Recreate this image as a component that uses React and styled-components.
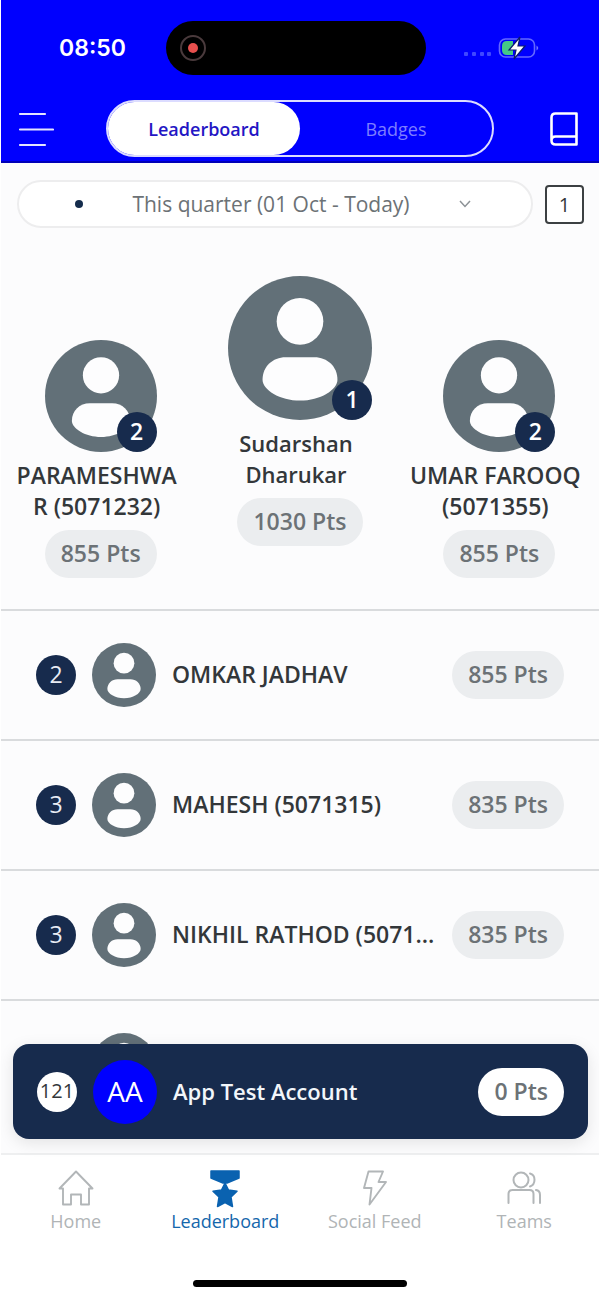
import React, { useState } from "react";
import styled, { createGlobalStyle } from "styled-components";

const podium = [
  { rank: 2, lines: ["PARAMESHWA", "R (5071232)"], points: 855 },
  { rank: 1, lines: ["Sudarshan", "Dharukar"], points: 1030, first: true },
  { rank: 2, lines: ["UMAR FAROOQ", "(5071355)"], points: 855 },
];

const players = [
  { rank: 2, name: "OMKAR JADHAV", points: 855 },
  { rank: 3, name: "MAHESH (5071315)", points: 835 },
  { rank: 3, name: "NIKHIL RATHOD (5071...", points: 835 },
];

const Avatar = ({ size }) => (
  <AvatarSvg viewBox="0 0 100 100" $size={size} aria-hidden="true">
    <circle cx="50" cy="50" r="50" fill="#627078" />
    <circle cx="50" cy="31.5" r="16.2" fill="#fdfdfe" />
    <path
      d="M40 56.5H60C69 56.5 76 63 76 72C76 79 64 86.5 50 86.5S24 79 24 72C24 63 31 56.5 40 56.5Z"
      fill="#fdfdfe"
    />
  </AvatarSvg>
);

const StatusBar = () => (
  <Status>
    <Time>08:50</Time>
    <Island>
      <svg width="26" height="26" viewBox="0 0 26 26">
        <circle cx="13" cy="13" r="12" fill="none" stroke="#4a3a3c" strokeWidth="2" />
        <circle cx="13" cy="13" r="5" fill="#e8504e" />
      </svg>
    </Island>
    <Signals>
      <svg width="76" height="24" viewBox="0 0 76 24">
        <g fill="#4048ff">
          <rect x="1" y="16" width="4" height="4" rx="1" />
          <rect x="9" y="16" width="4" height="4" rx="1" />
          <rect x="17" y="16" width="4" height="4" rx="1" />
          <rect x="24" y="16" width="4" height="4" rx="1" />
        </g>
        <rect x="36.5" y="3" width="35" height="18" rx="6" fill="none" stroke="#6468ff" strokeWidth="1.6" />
        <path d="M50 5H44Q39 5 39 10V14Q39 19 44 19H50Z" fill="#45c986" />
        <path d="M73.5 9.5Q77 12 73.5 14.5Z" fill="#7478ff" />
        <path d="M57 1L46 14H53L51 23L62 10H55Z" fill="#fff" stroke="#0a1c6c" strokeWidth="1.2" />
      </svg>
    </Signals>
  </Status>
);

const MenuIcon = () => (
  <svg width="36" height="36" viewBox="0 0 36 36" stroke="#e4e4ff" strokeWidth="2.2" strokeLinecap="round">
    <path d="M2 3H27M2 18.5H35M2 34H27" />
  </svg>
);

const BookIcon = () => (
  <svg width="28" height="34" viewBox="0 0 28 34" fill="none" stroke="#fff" strokeWidth="2.6" strokeLinejoin="round">
    <path d="M1.5 28.5V5.5Q1.5 1.5 5.5 1.5H26.5V32.5H5.5Q1.5 32.5 1.5 28.5Q1.5 24.5 5.5 24.5H26.5" />
  </svg>
);

const HomeIcon = () => (
  <svg width="36" height="36" viewBox="0 0 36 36" fill="none" stroke="#b2b6b8" strokeWidth="1.9" strokeLinejoin="round">
    <path d="M18 1.5L1.5 18.5H5V34.5H13V24.5H23V34.5H31V18.5H34.5Z" />
  </svg>
);

const MedalIcon = () => (
  <svg width="36" height="38" viewBox="0 0 36 38" fill="#0a62b0" stroke="#0a62b0" strokeLinejoin="round">
    <path d="M4 1H32V8L20 13H16L4 8Z" strokeWidth="1.5" />
    <path d="M18 13L21.5 20L30 21.2L24 27L25.5 36.5L18 32.5L10.5 36.5L12 27L6 21.2L14.5 20Z" strokeWidth="1.5" />
  </svg>
);

const BoltIcon = () => (
  <svg width="36" height="36" viewBox="0 0 36 36" fill="none" stroke="#b2b6b8" strokeWidth="1.9" strokeLinejoin="round">
    <path d="M11.5 1.5H26L21.5 12H29L12.5 34.5L14.5 18H7Z" />
  </svg>
);

const TeamIcon = () => (
  <svg width="36" height="36" viewBox="0 0 36 36" fill="none" stroke="#b2b6b8" strokeWidth="2" strokeLinecap="round" strokeLinejoin="round">
    <circle cx="15" cy="10" r="7.5" />
    <path d="M2.5 33V24Q2.5 20 6.5 20H23.5Q27.5 20 27.5 24V33" />
    <path d="M24 3.5C30 5 30 14.5 24 16.5M30 20Q34 20.5 34 25V33" />
  </svg>
);

const tabs = [
  { label: "Home", Icon: HomeIcon },
  { label: "Leaderboard", Icon: MedalIcon, active: true },
  { label: "Social Feed", Icon: BoltIcon },
  { label: "Teams", Icon: TeamIcon },
];

export default function App() {
  const [view, setView] = useState("Leaderboard");

  return (
    <Page>
      <GlobalStyle />
      <Header>
        <StatusBar />
        <Toolbar>
          <IconButton type="button" aria-label="Menu">
            <MenuIcon />
          </IconButton>
          <Segments>
            {["Leaderboard", "Badges"].map(name => (
              <Segment key={name} type="button" $active={view === name} onClick={() => setView(name)}>
                {name}
              </Segment>
            ))}
          </Segments>
          <IconButton type="button" aria-label="Rules">
            <BookIcon />
          </IconButton>
        </Toolbar>
      </Header>

      <Main>
        <Filters>
          <PeriodButton type="button">
            <Dot />
            <span>This quarter (01 Oct - Today)</span>
            <svg width="12" height="8" viewBox="0 0 12 8" fill="none" stroke="#8c9296" strokeWidth="1.5">
              <path d="M1 1L6 6.5L11 1" />
            </svg>
          </PeriodButton>
          <CountButton type="button">1</CountButton>
        </Filters>

        <Podium>
          {podium.map(({ rank, lines, points, first }) => (
            <Winner key={lines[0]} $first={first}>
              <Portrait>
                <Avatar size={first ? 144 : 112} />
                <PortraitRank>{rank}</PortraitRank>
              </Portrait>
              <WinnerName $first={first}>
                {lines[0]}
                <br />
                {lines[1]}
              </WinnerName>
              <Points>{points} Pts</Points>
            </Winner>
          ))}
        </Podium>

        <List>
          {players.map(({ rank, name, points }) => (
            <Row key={name}>
              <Rank>{rank}</Rank>
              <Avatar size={64} />
              <Name>{name}</Name>
              <Points>{points} Pts</Points>
            </Row>
          ))}
          <Row aria-hidden="true">
            <Rank />
            <Avatar size={64} />
            <Name />
          </Row>
        </List>
      </Main>

      <Footer>
        <Account>
          <Rank $light>121</Rank>
          <Initials>AA</Initials>
          <Name $small>App Test Account</Name>
          <Points $light>0 Pts</Points>
        </Account>
        <Nav>
          {tabs.map(({ label, Icon, active }) => (
            <NavLink key={label} href="#" $active={active}>
              <Icon />
              {label}
            </NavLink>
          ))}
        </Nav>
        <HomeBar />
      </Footer>
    </Page>
  );
}

const GlobalStyle = createGlobalStyle`
  * {
    box-sizing: border-box;
  }
  body {
    margin: 0;
    background: #fff;
    color: #33373a;
    font-family: "Open Sans", "Noto Sans", sans-serif;
  }
  button {
    padding: 0;
    border: 0;
    background: none;
    font: inherit;
    cursor: pointer;
  }
  svg {
    display: block;
    flex-shrink: 0;
  }
`;

const Page = styled.div`
  display: flex;
  flex-direction: column;
  height: 100vh;
  padding: 0 1px;
`;

const Header = styled.header`
  background: #0000fe;
  border-bottom: 2px solid #0000b8;
`;

const Status = styled.div`
  display: grid;
  grid-template-columns: 1fr 260px 1fr;
  align-items: center;
  padding: 21px 16px 0 8px;
`;

const Time = styled.span`
  justify-self: center;
  padding-left: 10px;
  color: #fff;
  font-family: Inter, sans-serif;
  font-size: 23px;
  font-weight: 600;
`;

const Island = styled.div`
  display: flex;
  align-items: center;
  height: 54px;
  padding-left: 14px;
  border-radius: 27px;
  background: #000;
`;

const Signals = styled.div`
  justify-self: center;
  padding-right: 8px;
`;

const Toolbar = styled.div`
  display: flex;
  align-items: center;
  padding: 25px 21px 4px 17px;
`;

const IconButton = styled.button`
  display: flex;
`;

const Segments = styled.div`
  display: flex;
  flex: 1;
  height: 57px;
  margin: 0 56px 0 52px;
  border: 2px solid #dcdcff;
  border-radius: 29px;
`;

const Segment = styled.button`
  flex: 1;
  border-radius: 27px;
  background: ${({ $active }) => ($active ? "#fff" : "transparent")};
  color: ${({ $active }) => ($active ? "#2416c4" : "#7d7dff")};
  font-size: 18px;
  font-weight: ${({ $active }) => ($active ? 600 : 500)};
`;

const Main = styled.main`
  flex: 1;
  min-height: 0;
  overflow-y: auto;
  scrollbar-width: none;
  background: #fcfcfd;
`;

const Filters = styled.div`
  display: flex;
  align-items: center;
  gap: 12px;
  padding: 17px 15px 0 16px;
`;

const PeriodButton = styled.button`
  display: flex;
  flex: 1;
  align-items: center;
  justify-content: space-between;
  height: 48px;
  padding: 0 60px 0 56px;
  border: 2px solid #ededee;
  border-radius: 24px;
  background: #fff;
  color: #6c7276;
  font-size: 21px;
  font-weight: 500;
`;

const Dot = styled.i`
  width: 8px;
  height: 8px;
  border-radius: 50%;
  background: #142c4c;
`;

const CountButton = styled.button`
  width: 39px;
  height: 39px;
  border: 2px solid #3c4042;
  border-radius: 4px;
  background: #fff;
  color: #33373a;
  font-size: 20px;
`;

const Podium = styled.section`
  display: grid;
  grid-template-columns: repeat(3, 1fr);
  padding: 48px 0 31px;
  border-bottom: 2px solid #d9dbdd;
`;

const Winner = styled.div`
  display: flex;
  flex-direction: column;
  align-items: center;
  gap: 8px;
  padding-top: ${({ $first }) => ($first ? 0 : 64)}px;
`;

const Portrait = styled.div`
  position: relative;
`;

const AvatarSvg = styled.svg`
  width: ${({ $size }) => $size}px;
  height: ${({ $size }) => $size}px;
`;

const Rank = styled.span`
  display: flex;
  flex-shrink: 0;
  align-items: center;
  justify-content: center;
  width: 40px;
  height: 40px;
  padding-bottom: 2px;
  border-radius: 50%;
  background: ${({ $light }) => ($light ? "#fff" : "#172b4d")};
  color: ${({ $light }) => ($light ? "#33373a" : "#e8ecf4")};
  font-size: ${({ $light }) => ($light ? 20 : 23)}px;
`;

const PortraitRank = styled(Rank)`
  position: absolute;
  right: 0;
  bottom: 0;
  color: #fff;
  font-weight: 600;
`;

const WinnerName = styled.div`
  padding-right: 8px;
  font-size: ${({ $first }) => ($first ? 22 : 23)}px;
  font-weight: 600;
  line-height: 31px;
  text-align: center;
  white-space: nowrap;
`;

const Points = styled.span`
  flex-shrink: 0;
  padding: 0 16px 2px;
  border-radius: 24px;
  background: ${({ $light }) => ($light ? "#fff" : "#ebedef")};
  color: #6c7276;
  font-size: 23px;
  font-weight: 600;
  line-height: 46px;
`;

const List = styled.section`
  display: flex;
  flex-direction: column;
`;

const Row = styled.div`
  display: flex;
  align-items: center;
  gap: 16px;
  padding: 32px 35px;
  border-bottom: 2px solid #d9dbdd;

  &:last-child {
    border-bottom: 0;
  }
`;

const Name = styled.span`
  flex: 1;
  min-width: 0;
  padding-bottom: 2px;
  font-size: ${({ $small }) => ($small ? 22 : 23)}px;
  font-weight: 600;
  line-height: 32px;
  white-space: nowrap;
`;

const Footer = styled.footer`
  position: relative;
  border-top: 2px solid #eeeff0;
  background: #fff;
`;

const Account = styled.div`
  position: absolute;
  right: 11px;
  bottom: calc(100% + 16px);
  left: 12px;
  display: flex;
  align-items: center;
  gap: 16px;
  height: 95px;
  padding: 0 24px;
  border-radius: 16px;
  background: #172b4d;
  box-shadow: 0 4px 16px rgba(0, 0, 0, 0.1);
  color: #f2f6fa;
`;

const Initials = styled.span`
  display: flex;
  align-items: center;
  justify-content: center;
  width: 64px;
  height: 64px;
  padding-bottom: 2px;
  border-radius: 50%;
  background: #0000fe;
  color: #fff;
  font-size: 28px;
`;

const Nav = styled.nav`
  display: grid;
  grid-template-columns: repeat(4, 1fr);
  padding-top: 15px;
`;

const NavLink = styled.a`
  display: flex;
  flex-direction: column;
  align-items: center;
  justify-content: space-between;
  height: 63px;
  color: ${({ $active }) => ($active ? "#1467ac" : "#b0b4b6")};
  font-size: 18px;
  line-height: 24px;
  text-decoration: none;
`;

const HomeBar = styled.div`
  width: 214px;
  height: 7px;
  margin: 47px auto 12px;
  border-radius: 4px;
  background: #000;
`;
